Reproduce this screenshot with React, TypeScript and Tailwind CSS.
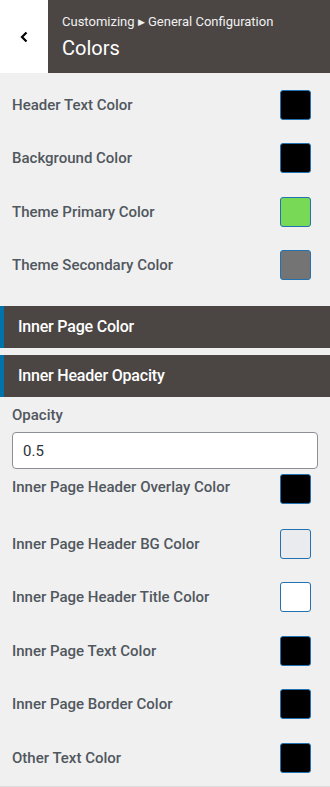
import React from 'react';

const topColors = [
  { label: 'Header Text Color', color: '#000000' },
  { label: 'Background Color', color: '#000000' },
  { label: 'Theme Primary Color', color: '#77d955' },
  { label: 'Theme Secondary Color', color: '#747474' },
];

const innerColors = [
  { label: 'Inner Page Header BG Color', color: '#e9ebee' },
  { label: 'Inner Page Header Title Color', color: '#ffffff' },
  { label: 'Inner Page Text Color', color: '#000000' },
  { label: 'Inner Page Border Color', color: '#000000' },
  { label: 'Other Text Color', color: '#000000' },
];

function ColorRow({ label, color }: { label: string; color: string }) {
  return (
    <div className="flex items-center justify-between h-[53.5px] pl-3 pr-[19px]">
      <span className="text-[15px] font-medium text-[#50575e]">{label}</span>
      <span
        className="w-[31px] h-[30px] rounded-[3px] border border-[#2271b1]"
        style={{ backgroundColor: color }}
      />
    </div>
  );
}

function SectionBar({ title }: { title: string }) {
  return (
    <div className="h-[42px] bg-[#4b4644] border-l-4 border-[#0073aa] flex items-center pl-[14px]">
      <span className="text-white text-[16px] font-medium tracking-[-0.2px]">{title}</span>
    </div>
  );
}

export default function App() {
  return (
    <div className="w-[330px] h-[787px] bg-[#f0f0f0] font-['Roboto',sans-serif] overflow-hidden">
      {/* Header */}
      <header className="h-[73px] flex">
        <button className="w-[48px] bg-white flex items-center justify-center text-black">
          <svg width="12" height="14" viewBox="0 0 12 14" fill="none">
            <path d="M8.5 2.5 L4 7 L8.5 11.5" stroke="#000" strokeWidth="2.2" />
          </svg>
        </button>
        <div className="flex-1 bg-[#4b4644] pl-[14px] pt-[12px]">
          <div className="text-[13px] text-[#f0f0f0] leading-[20px]">
            Customizing <span className="text-[9px] align-[1px]">▶</span> General Configuration
          </div>
          <div className="text-[20px] text-white leading-[28px] mt-[2px]">Colors</div>
        </div>
      </header>

      <div className="pt-[5px]">
        {topColors.map((c) => (
          <ColorRow key={c.label} {...c} />
        ))}
      </div>

      <div className="mt-[14px] flex flex-col gap-[7px]">
        <SectionBar title="Inner Page Color" />
        <SectionBar title="Inner Header Opacity" />
      </div>

      <div className="px-3 pt-[8px]">
        <div className="text-[15px] font-medium text-[#50575e] leading-[20px]">Opacity</div>
        <input
          type="text"
          defaultValue="0.5"
          className="mt-[7px] w-[306px] h-[37px] bg-white border border-[#8c8f94] rounded-[4px] px-[10px] text-[15px] text-[#2c3338] outline-none"
        />
      </div>

      <div className="flex items-center justify-between h-[34px] pl-3 pr-[19px] mt-[3px]">
        <span className="text-[15px] font-medium text-[#50575e] -mt-[3px]">Inner Page Header Overlay Color</span>
        <span className="w-[31px] h-[30px] rounded-[3px] border border-[#2271b1] bg-black" />
      </div>
      <div className="pt-[11px] border-b border-[#dcdcde] pb-[1px]">
        {innerColors.map((c) => (
          <ColorRow key={c.label} {...c} />
        ))}
      </div>
    </div>
  );
}
